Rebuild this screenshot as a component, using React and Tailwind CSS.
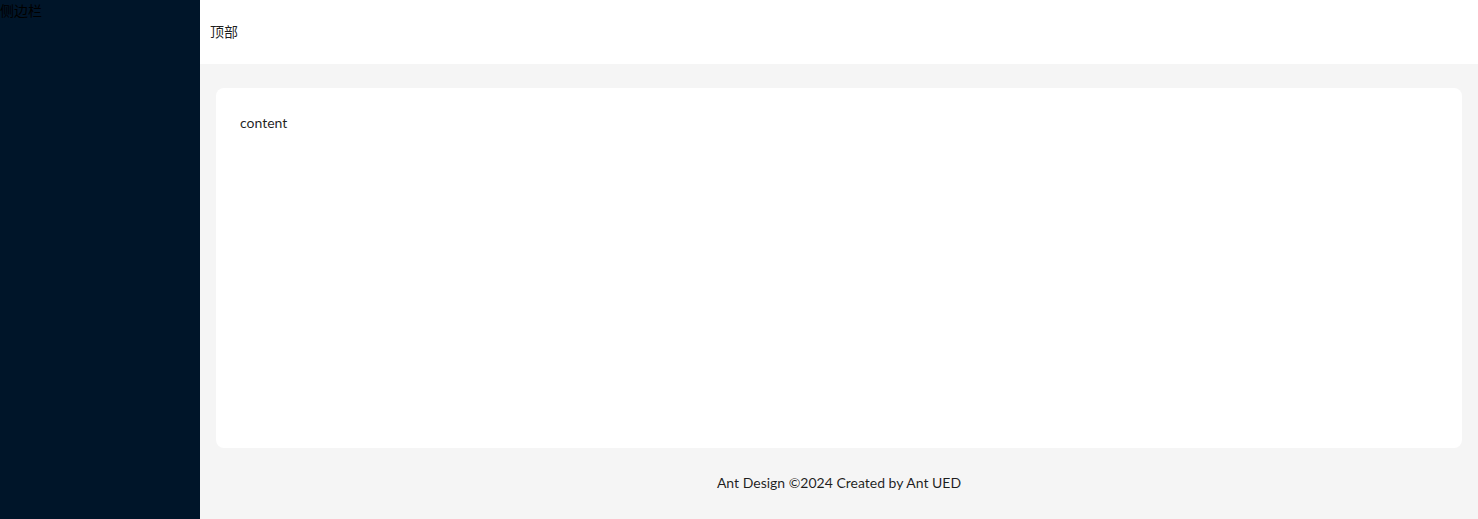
import React from 'react';

function App() {
  return (
    <div className="flex min-h-screen w-full text-[14px] leading-[22px] text-[rgba(0,0,0,0.88)] font-['Segoe_UI','Lato','Noto_Sans_CJK_SC',sans-serif]">
      {/* sider */}
      <aside className="w-[200px] shrink-0 bg-[#001529] text-black">
        <div>侧边栏</div>
      </aside>

      {/* main */}
      <div className="flex flex-1 flex-col bg-[#f5f5f5]">
        <header className="h-16 bg-white pl-[10px] leading-[64px]">顶部</header>

        <main className="mx-4 mt-6">
          <div className="min-h-[360px] rounded-lg bg-white p-6">content</div>
        </main>

        <footer className="px-[50px] py-6 text-center">Ant Design ©2024 Created by Ant UED</footer>
      </div>
    </div>
  );
}

export default App;
